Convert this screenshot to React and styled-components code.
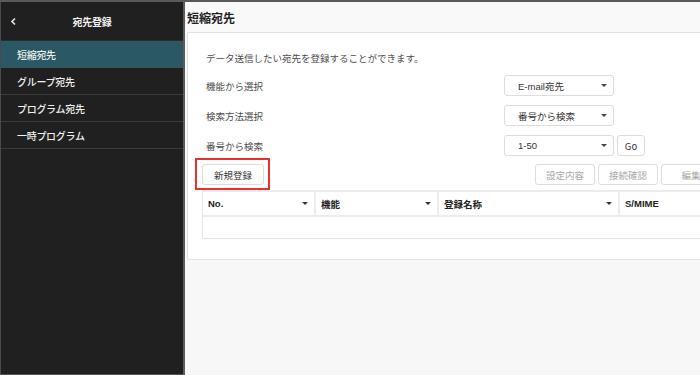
import styled, { createGlobalStyle } from "styled-components";

const GlobalStyle = createGlobalStyle`
  html, body {
    margin: 0;
    padding: 0;
    background: #f7f7f7;
    font-family: "Noto Sans CJK JP", "Noto Sans", "Liberation Sans", sans-serif;
  }
  * { box-sizing: border-box; }
`;

const Frame = styled.div`
  width: 700px;
  height: 375px;
  display: flex;
  border-top: 2px solid #5a5a5a;
  overflow: hidden;
`;

const Sidebar = styled.nav`
  width: 185px;
  flex-shrink: 0;
  background: #202020;
  border-left: 1px solid #4a4a4a;
  border-right: 2px solid #5c5c5c;
  border-bottom: 1px solid #555;
  display: flex;
  flex-direction: column;
`;

const SideHeader = styled.div`
  height: 39px;
  display: flex;
  align-items: center;
  color: #f2f2f2;
  font-size: 10px;
  font-weight: 700;
  border-bottom: 1px solid #2c2c2c;
`;

const BackIcon = styled.span`
  width: 30px;
  padding-left: 9px;
  display: flex;
  align-items: center;
`;

const SideTitle = styled.span`
  flex: 1;
  text-align: center;
  padding-right: 30px;
  letter-spacing: -0.3px;
`;

const SideItem = styled.div`
  height: 27px;
  padding-left: 16px;
  display: flex;
  align-items: center;
  font-size: 10px;
  font-weight: 500;
  color: #f0f0f0;
  letter-spacing: -0.3px;
  background: ${(p) => (p.$active ? "#2a5864" : "transparent")};
  border-bottom: 1px solid ${(p) => (p.$active ? "#2a5864" : "#3b3b3b")};
`;

const Main = styled.main`
  flex: 1;
  min-width: 0;
  display: flex;
  flex-direction: column;
  background: #f7f7f7;
`;

const PageHeader = styled.div`
  height: 30px;
  padding-left: 2px;
  display: flex;
  align-items: center;
  font-size: 12px;
  font-weight: 700;
  color: #222;
  background: #f9f9f9;
`;

const Card = styled.section`
  width: 549px;
  margin-left: 2px;
  background: #fff;
  border: 1px solid #e2e2e2;
  border-radius: 2px;
  padding: 12px 14px 20px 14px;
`;

const Desc = styled.p`
  margin: 0 0 0 4px;
  height: 26px;
  display: flex;
  align-items: center;
  font-size: 9.5px;
  color: #4a4a4a;
`;

const Form = styled.div`
  display: grid;
  grid-template-columns: 298px auto;
  row-gap: 9px;
  margin-top: 4px;
  padding-left: 4px;
  align-items: center;
`;

const Label = styled.span`
  font-size: 9.5px;
  color: #4a4a4a;
`;

const SelectRow = styled.div`
  display: flex;
  gap: 3px;
`;

const Select = styled.div`
  width: 110px;
  height: 21px;
  border: 1px solid #dcdcdc;
  border-radius: 3px;
  padding: 0 6px 0 13px;
  display: flex;
  align-items: center;
  justify-content: space-between;
  font-size: 9.5px;
  color: #333;
  font-family: "Liberation Sans", "Noto Sans CJK JP", sans-serif;
`;

const Caret = styled.span`
  width: 0;
  height: 0;
  border-left: 3px solid transparent;
  border-right: 3px solid transparent;
  border-top: 3px solid ${(p) => p.$color || "#444"};
`;

const Button = styled.button`
  height: 21px;
  width: ${(p) => p.$w || 60}px;
  background: #fff;
  border: 1px solid #dcdcdc;
  border-radius: 3px;
  font-family: "Noto Sans CJK JP", "Liberation Sans", sans-serif;
  font-size: 9.5px;
  color: ${(p) => (p.$disabled ? "#a8a8a8" : "#333")};
  padding: 0;
  display: flex;
  align-items: center;
  justify-content: center;
`;

const ActionBar = styled.div`
  margin-top: 8px;
  display: flex;
  align-items: center;
`;

const Highlight = styled.div`
  position: relative;
  &::after {
    content: "";
    position: absolute;
    top: -6px;
    left: -7px;
    right: -6px;
    bottom: -5px;
    border: 2px solid #ec2f31;
    pointer-events: none;
  }
`;

const RightActions = styled.div`
  margin-left: auto;
  display: flex;
  gap: 3px;
`;

const Table = styled.div`
  margin-top: 5px;
  border: 1px solid #e3e3e3;
  border-top: 2px solid #ececec;
`;

const HeadRow = styled.div`
  display: grid;
  grid-template-columns: 113px 123px 181px 1fr;
  height: 25px;
  border-bottom: 2px solid #ececec;
`;

const HeadCell = styled.div`
  display: flex;
  align-items: center;
  justify-content: space-between;
  padding: 0 6px 0 5px;
  font-size: 9.5px;
  font-weight: 700;
  color: #222;
  border-right: ${(p) => (p.$last ? "none" : "2px solid #ececec")};
  font-family: "Liberation Sans", "Noto Sans CJK JP", sans-serif;
`;

const BodyRow = styled.div`
  height: 21px;
`;

const Chevron = () => (
  <svg width="7" height="9" viewBox="0 0 7 9">
    <path d="M5 1.5 L2 4.5 L5 7.5" fill="none" stroke="#e8e8e8" strokeWidth="1.6" />
  </svg>
);

const menu = ["グループ宛先", "プログラム宛先", "一時プログラム"];

export default function App() {
  return (
    <>
      <GlobalStyle />
      <Frame>
        <Sidebar>
          <SideHeader>
            <BackIcon>
              <Chevron />
            </BackIcon>
            <SideTitle>宛先登録</SideTitle>
          </SideHeader>
          <SideItem $active>短縮宛先</SideItem>
          {menu.map((m) => (
            <SideItem key={m}>{m}</SideItem>
          ))}
        </Sidebar>
        <Main>
          <PageHeader>短縮宛先</PageHeader>
          <Card>
            <Desc>データ送信したい宛先を登録することができます。</Desc>
            <Form>
              <Label>機能から選択</Label>
              <Select>
                E-mail宛先 <Caret />
              </Select>
              <Label>検索方法選択</Label>
              <Select>
                番号から検索 <Caret />
              </Select>
              <Label>番号から検索</Label>
              <SelectRow>
                <Select>
                  1-50 <Caret />
                </Select>
                <Button $w={28}>Go</Button>
              </SelectRow>
            </Form>
            <ActionBar>
              <Highlight>
                <Button $w={62}>新規登録</Button>
              </Highlight>
              <RightActions>
                <Button $disabled>設定内容</Button>
                <Button $disabled>接続確認</Button>
                <Button $disabled>編集</Button>
              </RightActions>
            </ActionBar>
            <Table>
              <HeadRow>
                <HeadCell>
                  No. <Caret $color="#333" />
                </HeadCell>
                <HeadCell>
                  機能 <Caret $color="#333" />
                </HeadCell>
                <HeadCell>
                  登録名称 <Caret $color="#333" />
                </HeadCell>
                <HeadCell $last>S/MIME</HeadCell>
              </HeadRow>
              <BodyRow />
            </Table>
          </Card>
        </Main>
      </Frame>
    </>
  );
}
